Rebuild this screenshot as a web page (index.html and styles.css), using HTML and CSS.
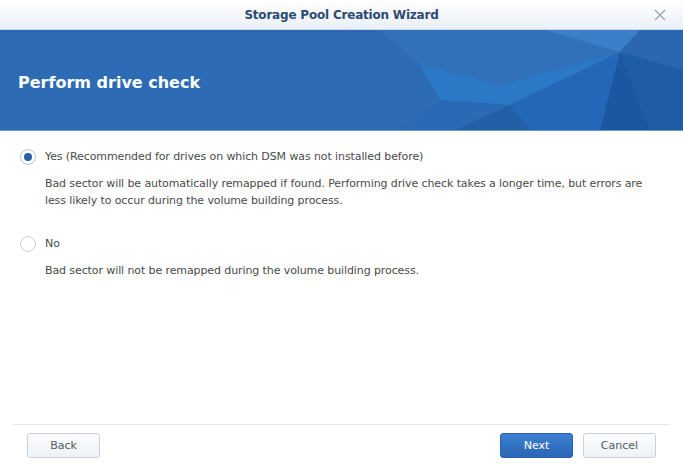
FILE: index.html
```html
<!DOCTYPE html>
<html>
<head>
<meta charset="utf-8">
<link rel="stylesheet" href="styles.css">
</head>
<body>
<div class="window">
  <div class="titlebar">
    <span class="title">Storage Pool Creation Wizard</span>
    <svg class="close" width="12" height="12" viewBox="0 0 12 12"><path d="M1 1L11 11M11 1L1 11" stroke="#9aa3ad" stroke-width="1.3" fill="none"/></svg>
  </div>
  <div class="banner">
    <svg class="banner-art" width="683" height="100" viewBox="0 0 683 100" preserveAspectRatio="none">
      <polygon points="380,0 545,0 620,22 500,55 420,35" fill="#3071ba"/>
      <polygon points="545,0 640,0 620,22" fill="#3a7fc7"/>
      <polygon points="640,0 683,0 683,40 620,22" fill="#2b67b0"/>
      <polygon points="420,35 500,55 620,22 510,75 440,70" fill="#2b79c6"/>
      <polygon points="440,70 510,75 455,100 400,100" fill="#2a6ab5"/>
      <polygon points="510,75 620,22 600,100 530,100" fill="#2368b8"/>
      <polygon points="455,100 510,75 530,100" fill="#235fa6"/>
      <polygon points="620,22 683,40 683,100 650,100" fill="#1f5ca6"/>
      <polygon points="620,22 650,100 600,100" fill="#1b57a0"/>
    </svg>
    <h1 class="heading">Perform drive check</h1>
  </div>
  <div class="content">
    <div class="option">
      <div class="radio-row">
        <span class="radio checked"></span>
        <span class="label">Yes (Recommended for drives on which DSM was not installed before)</span>
      </div>
      <p class="desc">Bad sector will be automatically remapped if found. Performing drive check takes a longer time, but errors are less likely to occur during the volume building process.</p>
    </div>
    <div class="option">
      <div class="radio-row">
        <span class="radio"></span>
        <span class="label">No</span>
      </div>
      <p class="desc">Bad sector will not be remapped during the volume building process.</p>
    </div>
  </div>
  <div class="footer">
    <button class="btn">Back</button>
    <div class="right">
      <button class="btn primary">Next</button>
      <button class="btn">Cancel</button>
    </div>
  </div>
</div>
</body>
</html>
```
FILE: styles.css
```css
* { box-sizing: border-box; }
html, body { margin: 0; padding: 0; }
body {
  width: 683px;
  height: 464px;
  overflow: hidden;
  background: #fff;
  font-family: "DejaVu Sans", Verdana, sans-serif;
}
.window {
  display: flex;
  flex-direction: column;
  height: 464px;
}
.titlebar {
  height: 30px;
  flex: none;
  display: flex;
  align-items: center;
  justify-content: center;
  position: relative;
  background: linear-gradient(#ffffff, #eaf0f7);
  border-bottom: 1px solid #c8d6e6;
}
.title {
  font-weight: bold;
  font-size: 12px;
  letter-spacing: -0.2px;
  color: #2c4a72;
  padding-top: 1px;
}
.close {
  position: absolute;
  right: 17px;
  top: 9px;
}
.banner {
  height: 101px;
  flex: none;
  position: relative;
  background: #2d6cb4;
  border-bottom: 1px solid #6c95c4;
  display: flex;
  align-items: center;
  overflow: hidden;
}
.banner-art {
  position: absolute;
  left: 0;
  top: 0;
}
.heading {
  position: relative;
  margin: 0 0 0 18px;
  font-size: 16px;
  font-weight: bold;
  color: #fff;
  padding-top: 4px;
}
.content {
  flex: 1;
  padding: 17px 20px 0 20px;
  display: flex;
  flex-direction: column;
  gap: 26px;
}
.radio-row {
  display: flex;
  align-items: center;
  gap: 9px;
  height: 17px;
}
.radio {
  width: 16px;
  height: 16px;
  border-radius: 50%;
  border: 1px solid #c9cfd6;
  background: #fff;
  flex: none;
  position: relative;
}
.radio.checked {
  border-color: #b7c6d8;
}
.radio.checked::after {
  content: "";
  position: absolute;
  left: 3px;
  top: 3px;
  width: 8px;
  height: 8px;
  border-radius: 50%;
  background: #2a5ea8;
}
.label, .desc {
  font-size: 11px;
  color: #4a4a4a;
  letter-spacing: -0.1px;
}
.desc {
  margin: 10px 0 0 25px;
  line-height: 17px;
}
.footer {
  flex: none;
  height: 40px;
  margin: 0 13px;
  border-top: 1px solid #e3e6ea;
  display: flex;
  align-items: flex-start;
  justify-content: space-between;
  padding: 8px 14px 0 14px;
}
.right {
  display: flex;
  gap: 10px;
}
.btn {
  width: 73px;
  height: 25px;
  border: 1px solid #c9d2dc;
  border-radius: 3px;
  background: linear-gradient(#fbfcfd, #eef2f6);
  font-family: "DejaVu Sans", Verdana, sans-serif;
  font-size: 11px;
  color: #505a66;
  padding: 0;
}
.btn.primary {
  background: linear-gradient(#3c7fd0, #2a66b5);
  border-color: #2a62ad;
  color: #fff;
}
```
